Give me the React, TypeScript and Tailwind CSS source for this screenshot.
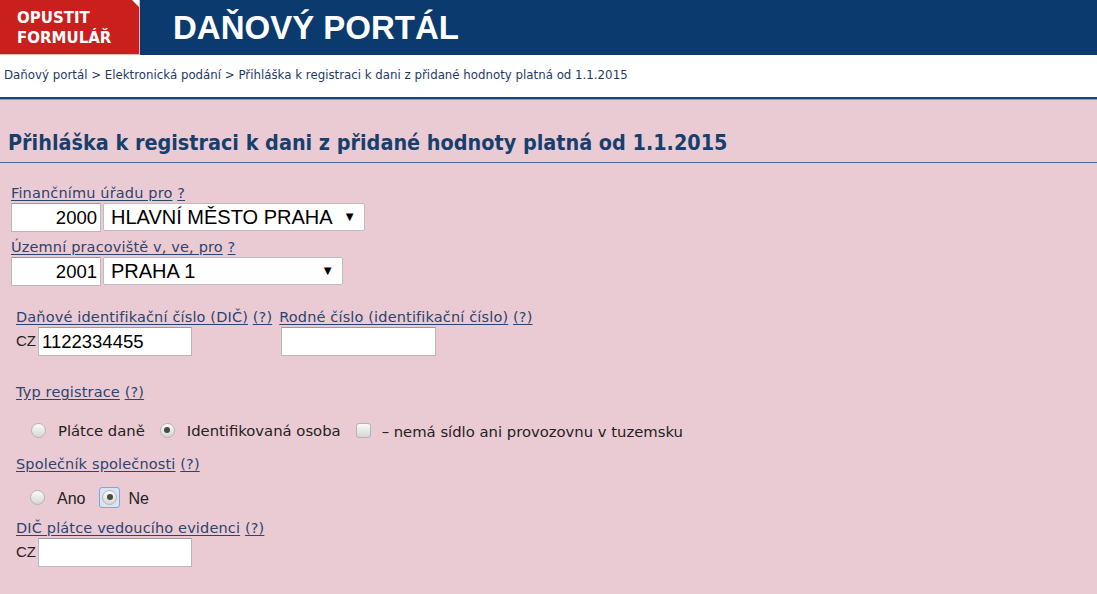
import React from 'react';

const verdana = "font-['DejaVu_Sans','Liberation_Sans',sans-serif]";
const condensed = "font-['DejaVu_Sans_Condensed','Liberation_Sans',sans-serif]";
const arial = "font-['Liberation_Sans',Arial,sans-serif]";

const HelpLink = ({ text, help }: { text: string; help: string }) => (
  <div className={`${verdana} text-[14.5px] leading-[18px] tracking-[0.15px] text-[#2b4470]`}>
    <span className="underline decoration-[#2b4470] underline-offset-2">{text}</span>{' '}
    <span className="underline decoration-[#2b4470] underline-offset-2">{help}</span>
  </div>
);

const Radio = ({ checked, focused }: { checked?: boolean; focused?: boolean }) => (
  <span
    className={`flex h-[21px] w-[21px] shrink-0 items-center justify-center rounded-[3px] ${
      focused ? 'border border-[#7fa3e6] bg-[#dbe2f4]' : ''
    }`}
  >
    <span className="flex h-[15px] w-[15px] items-center justify-center rounded-full border border-[#b4b4b4] bg-linear-to-b from-[#fbfbfb] to-[#d6d6d6]">
      {checked && <span className="h-[6px] w-[6px] rounded-full bg-[#4a4a4a]" />}
    </span>
  </span>
);

const Checkbox = () => (
  <span className="inline-block h-[15px] w-[15px] rounded-[3px] border border-[#b4b4b4] bg-linear-to-b from-[#fbfbfb] to-[#d6d6d6]" />
);

const TextBox = ({ value, className = '' }: { value?: string; className?: string }) => (
  <div
    className={`flex h-[29px] items-center border border-[#b9b9b9] border-t-[#9a9a9a] bg-white px-[3px] ${arial} text-[18.5px] text-black ${className}`}
  >
    {value}
  </div>
);

const SelectBox = ({ value, className = '' }: { value: string; className?: string }) => (
  <div
    className={`flex h-[28px] items-center justify-between rounded-[2px] border border-[#bdbdbd] bg-white pl-[7px] pr-[8px] ${arial} text-[20px] text-black ${className}`}
  >
    <span>{value}</span>
    <span className="text-[13px]">▼</span>
  </div>
);

export default function App() {
  return (
    <div className="min-h-[594px] w-full bg-[#ebcbd3]">
      {/* Header */}
      <div className="flex h-[55px] bg-[#0b3a6f]">
        <div className="relative w-[140px] border-r border-b border-[#e9b8b4] bg-[#c9201d] pl-[17px] pt-[8px]">
          <div className={`${verdana} text-[15px] font-bold leading-[20px] text-white`}>
            OPUSTIT
            <br />
            FORMULÁŘ
          </div>
          <span className="absolute right-0 top-0 h-0 w-0 border-l-[7px] border-t-[7px] border-l-transparent border-t-white" />
        </div>
        <div className={`ml-[33px] flex items-center ${arial} text-[33px] font-bold text-white`}>
          DAŇOVÝ PORTÁL
        </div>
      </div>

      {/* Breadcrumb */}
      <div className={`flex h-[42px] items-center bg-white px-[4px] ${verdana} text-[11.8px] text-[#1f3a5f]`}>
        Daňový portál &gt; Elektronická podání &gt; Přihláška k registraci k dani z přidané hodnoty platná od 1.1.2015
      </div>
      <div className="h-[3px] border-t-2 border-[#1c4575] bg-[#8aa0b8]" />

      {/* Title */}
      <div className="border-b border-[#4e6a8c] px-[8px] pb-[7px] pt-[30px]">
        <h1 className={`${condensed} text-[21.4px] font-bold leading-[25px] text-[#173f6e]`}>
          Přihláška k registraci k dani z přidané hodnoty platná od 1.1.2015
        </h1>
      </div>

      {/* Form */}
      <div className="pl-[11px] pt-[21px]">
        <HelpLink text="Finančnímu úřadu pro" help="?" />
        <div className="mt-[1px] flex gap-[2px]">
          <TextBox value="2000" className="w-[90px] justify-end" />
          <SelectBox value="HLAVNÍ MĚSTO PRAHA" className="w-[262px]" />
        </div>

        <div className="mt-[6px]">
          <HelpLink text="Územní pracoviště v, ve, pro" help="?" />
        </div>
        <div className="mt-[1px] flex gap-[2px]">
          <TextBox value="2001" className="w-[90px] justify-end" />
          <SelectBox value="PRAHA 1" className="w-[240px]" />
        </div>

        <div className="mt-[22px] flex gap-[7px] pl-[5px]">
          <div>
            <HelpLink text="Daňové identifikační číslo (DIČ)" help="(?)" />
            <div className="mt-[1px] flex items-center gap-[2px]">
              <span className={`${arial} text-[15px] text-[#222]`}>CZ</span>
              <TextBox value="1122334455" className="w-[154px]" />
            </div>
          </div>
          <div>
            <HelpLink text="Rodné číslo (identifikační číslo)" help="(?)" />
            <div className="mt-[1px] flex">
              <TextBox className="ml-[2px] w-[155px]" />
            </div>
          </div>
        </div>

        <div className="mt-[27px] pl-[5px]">
          <HelpLink text="Typ registrace" help="(?)" />
        </div>
        <div className={`mt-[17px] flex h-[24px] items-center pl-[17px] ${verdana} text-[14.8px] text-[#222]`}>
          <Radio />
          <span className="ml-[9px] mt-[3px]">Plátce daně</span>
          <span className="ml-[12px]">
            <Radio checked />
          </span>
          <span className="ml-[9px] mt-[3px]">Identifikovaná osoba</span>
          <span className="ml-[15px] flex items-center">
            <Checkbox />
          </span>
          <span className="ml-[11px] mt-[5px]">– nemá sídlo ani provozovnu v tuzemsku</span>
        </div>

        <div className="mt-[13px] pl-[5px]">
          <HelpLink text="Společník společnosti" help="(?)" />
        </div>
        <div className={`mt-[12px] flex h-[24px] items-center pl-[16px] ${arial} text-[16px] text-[#222]`}>
          <Radio />
          <span className="ml-[9px] mt-[3px]">Ano</span>
          <span className="ml-[14px]">
            <Radio checked focused />
          </span>
          <span className="ml-[8px] mt-[3px]">Ne</span>
        </div>

        <div className="mt-[10px] pl-[5px]">
          <HelpLink text="DIČ plátce vedoucího evidenci" help="(?)" />
          <div className="mt-[1px] flex items-center gap-[2px]">
            <span className={`${arial} text-[15px] text-[#222]`}>CZ</span>
            <TextBox className="w-[154px]" />
          </div>
        </div>
      </div>
    </div>
  );
}
